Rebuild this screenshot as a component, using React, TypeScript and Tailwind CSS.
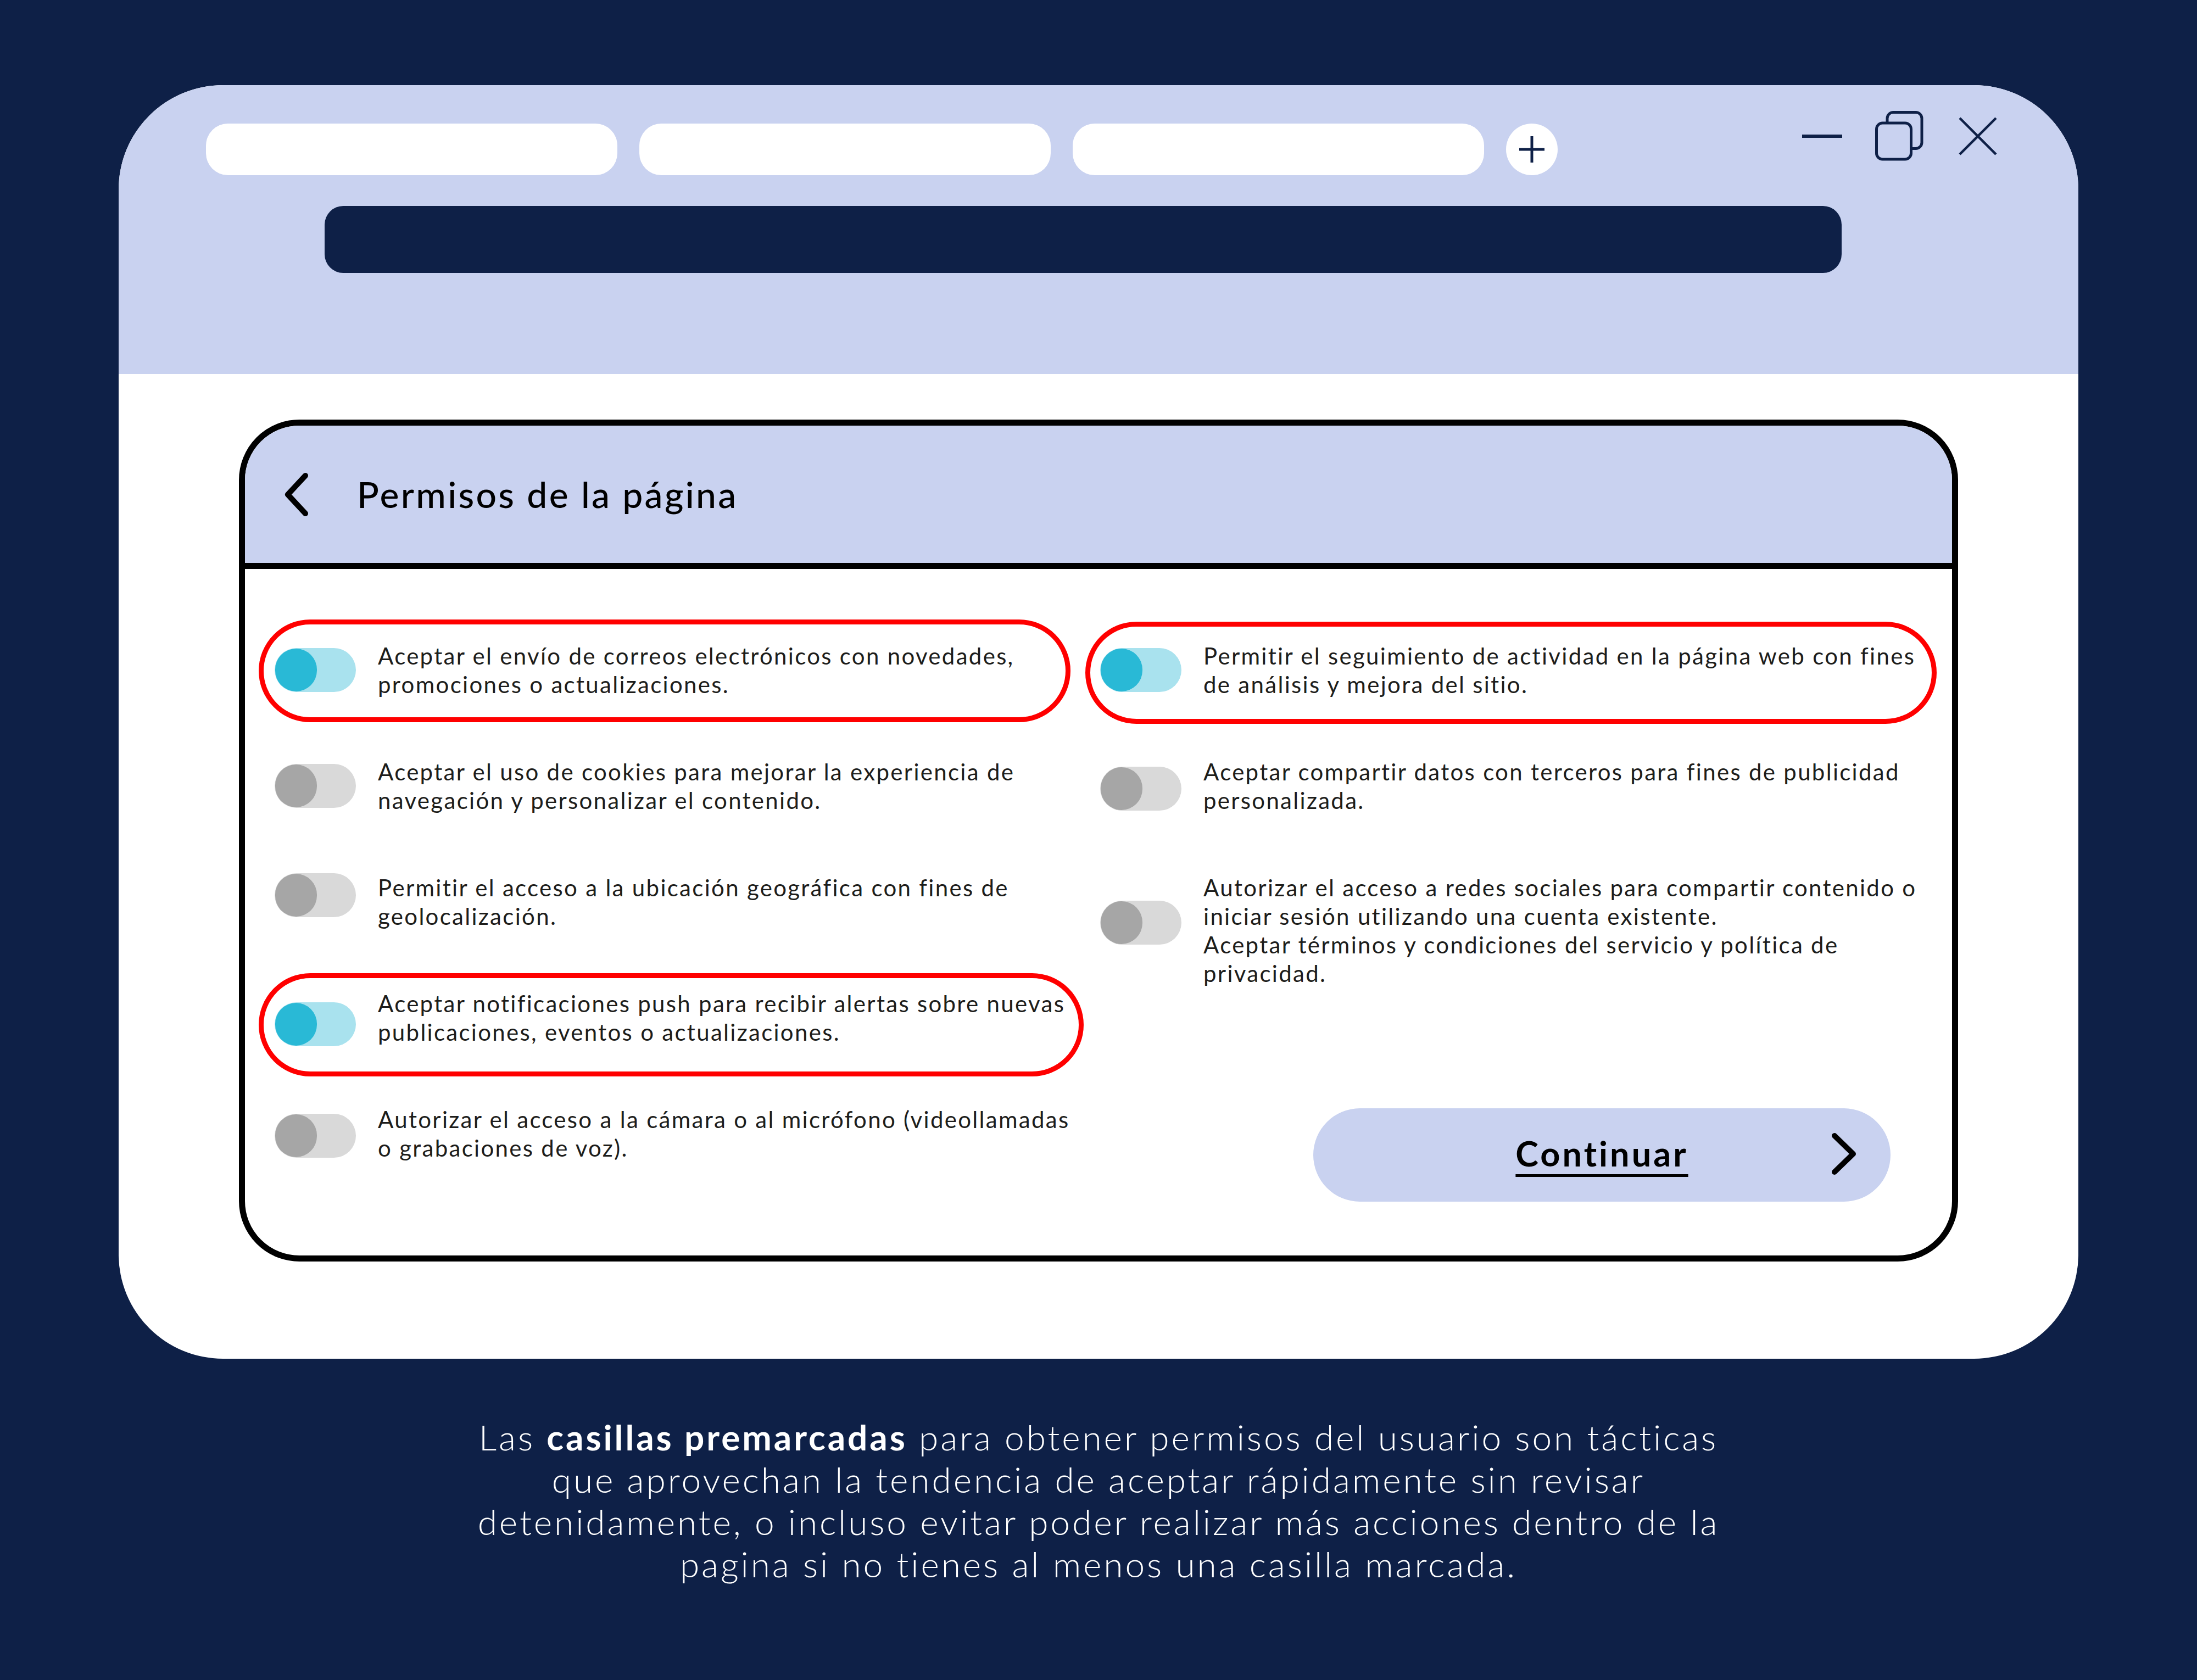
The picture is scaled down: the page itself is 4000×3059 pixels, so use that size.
import React from "react";

type Item = { on: boolean; lines: string[]; shift?: string; box?: string };

const leftItems: Item[] = [
  {
    on: true,
    lines: ["Aceptar el envío de correos electrónicos con novedades,", "promociones o actualizaciones."],
    box: "left-[-29px] top-[-40px] w-[1478px] h-[187px]",
  },
  {
    on: false,
    lines: ["Aceptar el uso de cookies para mejorar la experiencia de", "navegación y personalizar el contenido."],
  },
  {
    on: false,
    lines: ["Permitir el acceso a la ubicación geográfica con fines de", "geolocalización."],
    shift: "-translate-y-[12px]",
  },
  {
    on: true,
    lines: ["Aceptar notificaciones push para recibir alertas sobre nuevas", "publicaciones, eventos o actualizaciones."],
    shift: "translate-y-[12px]",
    box: "left-[-29px] top-[-29px] w-[1502px] h-[188px]",
  },
  {
    on: false,
    lines: ["Autorizar el acceso a la cámara o al micrófono (videollamadas", "o grabaciones de voz)."],
    shift: "translate-y-[4px]",
  },
];

const rightItems: Item[] = [
  {
    on: true,
    lines: ["Permitir el seguimiento de actividad en la página web con fines", "de análisis y mejora del sitio."],
    box: "left-[-27px] top-[-36px] w-[1550px] h-[186px]",
  },
  {
    on: false,
    lines: ["Aceptar compartir datos con terceros para fines de publicidad", "personalizada."],
    shift: "translate-y-[5px]",
  },
  {
    on: false,
    lines: [
      "Autorizar el acceso a redes sociales para compartir contenido o",
      "iniciar sesión utilizando una cuenta existente.",
      "Aceptar términos y condiciones del servicio y política de",
      "privacidad.",
    ],
    shift: "-translate-y-[14px]",
  },
];

function Toggle({ on, shift }: { on: boolean; shift?: string }) {
  return (
    <div
      className={
        (on ? "bg-[#a9e2ee] " : "bg-[#d9d9d9] ") +
        "w-[148px] h-[80px] rounded-full flex items-center pl-[1px] shrink-0 " +
        (shift ?? "")
      }
    >
      <div className={(on ? "bg-[#29b9d6] " : "bg-[#a6a6a6] ") + "w-[76px] h-[78px] rounded-full"} />
    </div>
  );
}

function Row({ item }: { item: Item }) {
  return (
    <div className="relative flex items-center gap-[40px]">
      {item.box && (
        <div className={"absolute border-[9px] border-[#ff0000] rounded-full pointer-events-none " + item.box} />
      )}
      <Toggle on={item.on} shift={item.shift} />
      <div className="text-[42px] leading-[52px] tracking-[2.3px] text-[#1d1d1b] whitespace-nowrap">
        {item.lines.map((l, i) => (
          <div key={i}>{l}</div>
        ))}
      </div>
    </div>
  );
}

function RestoreIcon() {
  return (
    <svg width="88" height="91" viewBox="0 0 88 91" fill="none">
      <rect x="22" y="2.5" width="63" height="66" rx="11" stroke="#0e2047" strokeWidth="5" fill="#c9d2f0" />
      <rect x="2.5" y="22" width="63" height="66" rx="11" stroke="#0e2047" strokeWidth="5" fill="#c9d2f0" />
    </svg>
  );
}

export default function App() {
  return (
    <div
      className="w-[4000px] h-[3059px] bg-[#0e2047] flex flex-col items-center pt-[155px]"
      style={{ fontFamily: "Lato, 'Noto Sans', sans-serif" }}
    >
      {/* Browser window */}
      <div className="w-[3568px] rounded-[190px] overflow-hidden bg-white flex flex-col">
        {/* Header band */}
        <div className="h-[526px] bg-[#c9d2f0] pt-[70px] pl-[159px] pr-[148px] flex flex-col">
          <div className="flex items-start">
            <div className="flex items-center gap-[40px]">
              <div className="w-[749px] h-[94px] bg-white rounded-[40px]" />
              <div className="w-[749px] h-[94px] bg-white rounded-[40px]" />
              <div className="w-[749px] h-[94px] bg-white rounded-[40px]" />
              <div className="w-[94px] h-[94px] bg-white rounded-full flex items-center justify-center">
                <svg width="46" height="48" viewBox="0 0 46 48">
                  <path d="M23 0 V48 M0 24 H46" stroke="#0e2047" strokeWidth="5" />
                </svg>
              </div>
            </div>
            <div className="ml-auto -mt-[23px] h-[91px] flex items-center">
              <div className="w-[73px] h-[6px] bg-[#0e2047]" />
              <div className="ml-[60px]">
                <RestoreIcon />
              </div>
              <div className="ml-[64px]">
                <svg width="70" height="70" viewBox="0 0 70 70">
                  <path d="M2 2 L68 68 M68 2 L2 68" stroke="#0e2047" strokeWidth="4.5" />
                </svg>
              </div>
            </div>
          </div>
          <div className="mt-[56px] ml-[216px] w-[2762px] h-[122px] rounded-[34px] bg-[#0e2047]" />
        </div>

        {/* Body */}
        <div className="pt-[83px] pb-[177px] flex justify-center">
          <div className="w-[3130px] border-[11px] border-black rounded-[110px] overflow-hidden bg-white">
            <div className="h-[261px] bg-[#c9d2f0] border-b-[11px] border-black flex items-center pl-[72px]">
              <svg width="44" height="81" viewBox="0 0 44 81" fill="none">
                <path d="M38 6 L6 40.5 L38 75" stroke="#000" strokeWidth="10" strokeLinecap="round" strokeLinejoin="round" />
              </svg>
              <div className="ml-[88px] text-[66px] font-medium text-black leading-none tracking-[3.3px]">
                Permisos de la página
              </div>
            </div>
            <div className="pt-[132px] pb-[98px] pl-[54px] grid grid-cols-[1503px_1fr]">
              <div className="flex flex-col gap-[107px]">
                {leftItems.map((it, i) => (
                  <Row key={i} item={it} />
                ))}
              </div>
              <div className="flex flex-col gap-[107px]">
                {rightItems.map((it, i) => (
                  <Row key={i} item={it} />
                ))}
                <div className="relative mt-[113px] ml-[388px] w-[1051px] h-[170px] rounded-full bg-[#c9d2f0] flex items-center justify-center">
                  <span className="-mt-[6px] text-[63px] font-bold text-black tracking-[4px] underline underline-offset-[14px] decoration-[5px]">
                    Continuar
                  </span>
                  <svg
                    className="absolute right-[62px] top-[44px]"
                    width="46"
                    height="78"
                    viewBox="0 0 46 78"
                    fill="none"
                  >
                    <path d="M6 6 L40 39 L6 72" stroke="#000" strokeWidth="10" strokeLinecap="round" strokeLinejoin="round" />
                  </svg>
                </div>
              </div>
            </div>
          </div>
        </div>
      </div>

      {/* Caption */}
      <div className="mt-[104px] text-center text-white text-[64px] leading-[77px] font-light tracking-[3.9px]">
        <div>
          Las <span className="font-bold">casillas premarcadas</span> para obtener permisos del usuario son tácticas
        </div>
        <div>que aprovechan la tendencia de aceptar rápidamente sin revisar</div>
        <div>detenidamente, o incluso evitar poder realizar más acciones dentro de la</div>
        <div>pagina si no tienes al menos una casilla marcada.</div>
      </div>
    </div>
  );
}
